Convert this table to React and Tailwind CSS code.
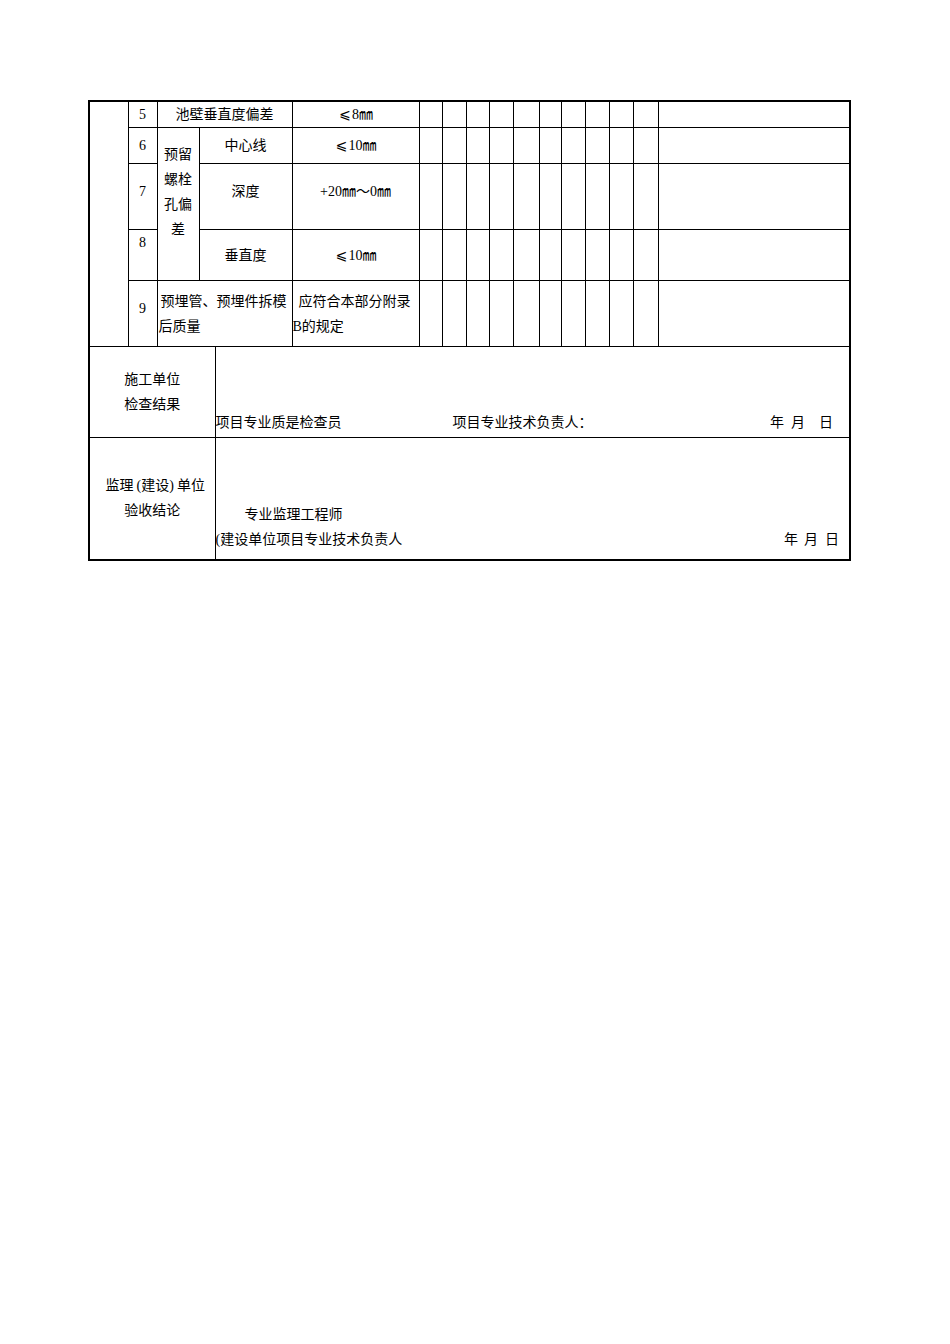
import React from "react";

const checkCols = ["w-[23px]", "w-[24px]", "w-[23px]", "w-[24px]", "w-[26px]", "w-[22px]", "w-[24px]", "w-[24px]", "w-[24px]", "w-[25px]"];

const CheckCells = () => (
  <>
    {checkCols.map((_, i) => (
      <td key={i} className="border border-black"></td>
    ))}
    <td className="border border-black"></td>
  </>
);

// slanted "less or equal" sign, full width like the source font
const Le = () => (
  <span className="inline-block w-[14px] text-center font-['DejaVu_Sans',sans-serif] text-[14px]">⩽</span>
);

const td = "border border-black text-center align-middle p-0";

const App = () => {
  return (
    <div className="min-h-screen bg-white pt-[100px] pl-[88px] text-[14px] leading-[25px] text-black font-['Liberation_Serif','Noto_Sans_CJK_SC',serif]">
      <table className="table-fixed border-collapse border-2 border-black w-[762px]">
        <colgroup>
          <col className="w-[39px]" />
          <col className="w-[29px]" />
          <col className="w-[42px]" />
          <col className="w-[16px]" />
          <col className="w-[77px]" />
          <col className="w-[127px]" />
          {checkCols.map((w, i) => (
            <col key={i} className={w} />
          ))}
          <col className="w-[192px]" />
        </colgroup>
        <tbody>
          {/* 5 */}
          <tr className="h-[26px]">
            <td rowSpan={5} className="border border-black"></td>
            <td className={td}>5</td>
            <td colSpan={3} className={td}>池壁垂直度偏差</td>
            <td className={td}>
              <Le />8㎜
            </td>
            <CheckCells />
          </tr>
          {/* 6 */}
          <tr className="h-[36px]">
            <td className={td}>6</td>
            <td rowSpan={3} className="border border-black text-center align-top px-[6px] pt-[14px]">
              预留螺栓孔偏差
            </td>
            <td colSpan={2} className={td}>中心线</td>
            <td className={td}>
              <Le />10㎜
            </td>
            <CheckCells />
          </tr>
          {/* 7 */}
          <tr className="h-[66px]">
            <td className={`${td} pb-[10px]`}>7</td>
            <td colSpan={2} className={`${td} pb-[10px]`}>深度</td>
            <td className={`${td} pb-[10px]`}>+20㎜～0㎜</td>
            <CheckCells />
          </tr>
          {/* 8 */}
          <tr className="h-[51px]">
            <td className="border border-black text-center align-top p-0">8</td>
            <td colSpan={2} className={td}>垂直度</td>
            <td className={td}>
              <Le />10㎜
            </td>
            <CheckCells />
          </tr>
          {/* 9 */}
          <tr className="h-[66px]">
            <td className={`${td} pb-[10px]`}>9</td>
            <td colSpan={3} className="border border-black text-left align-middle pl-[1px] indent-[2px]">
              预埋管、预埋件拆模后质量
            </td>
            <td className="border border-black text-left align-middle p-0 indent-[6px]">
              应符合本部分附录B的规定
            </td>
            <CheckCells />
          </tr>
          {/* 施工单位 */}
          <tr className="h-[91px]">
            <td colSpan={4} className={td}>
              <div>施工单位</div>
              <div>检查结果</div>
            </td>
            <td colSpan={13} className="border border-black align-bottom p-0 pb-[4px] leading-[20px]">
              <div className="flex">
                <span className="w-[237px] shrink-0">项目专业质是检查员</span>
                <span className="flex-1">项目专业技术负责人：</span>
                <span className="flex pr-[16px]">
                  <span>年</span>
                  <span className="ml-[7px]">月</span>
                  <span className="ml-[14px]">日</span>
                </span>
              </div>
            </td>
          </tr>
          {/* 监理单位 */}
          <tr className="h-[122px]">
            <td colSpan={4} className={td}>
              <div className="pl-[6px]">
                监理<span className="ml-[3px]">(</span>建设<span className="mr-[3px]">)</span>单位
              </div>
              <div>验收结论</div>
            </td>
            <td colSpan={13} className="border border-black align-bottom p-0 pb-[7px]">
              <div className="pl-[29px]">专业监理工程师</div>
              <div className="flex">
                <span className="flex-1">(建设单位项目专业技术负责人</span>
                <span className="flex pr-[10px]">
                  <span>年</span>
                  <span className="ml-[6px]">月</span>
                  <span className="ml-[7px]">日</span>
                </span>
              </div>
            </td>
          </tr>
        </tbody>
      </table>
    </div>
  );
};

export default App;
